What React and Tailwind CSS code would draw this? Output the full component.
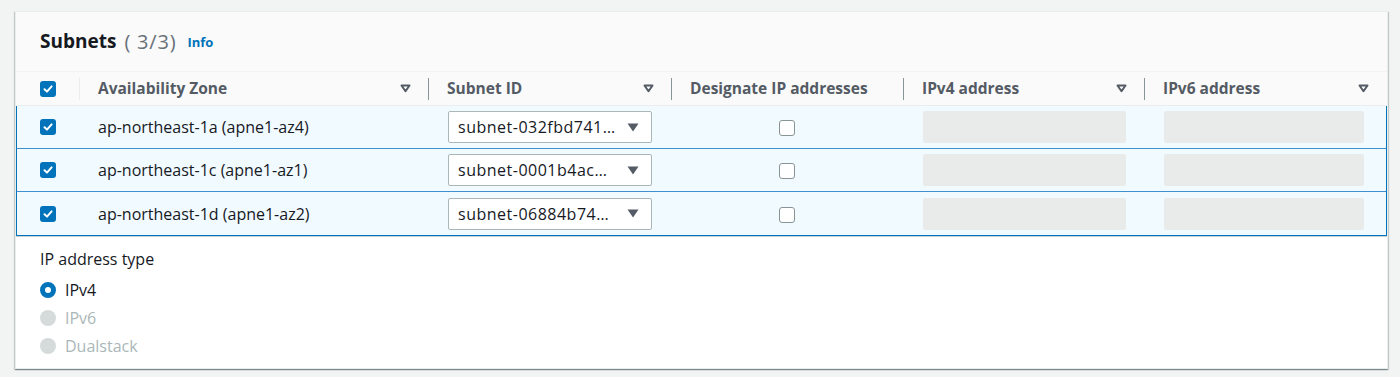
import React from "react";

const font = { fontFamily: '"Open Sans", "Noto Sans", Arial, sans-serif' };

function SortIcon() {
  return (
    <svg width="11" height="9" viewBox="0 0 11 9" className="shrink-0">
      <polygon points="1.5,1.5 9.5,1.5 5.5,7.2" fill="none" stroke="#545b64" strokeWidth="2" strokeLinejoin="round" />
    </svg>
  );
}

function Check({ checked }) {
  if (checked) {
    return (
      <div className="w-[16px] h-[16px] rounded-[3px] bg-[#0073bb] flex items-center justify-center shrink-0">
        <svg width="12" height="12" viewBox="0 0 12 12">
          <path d="M2.5 6.2 L5 8.6 L9.6 3.4" fill="none" stroke="#fff" strokeWidth="2" strokeLinecap="round" strokeLinejoin="round" />
        </svg>
      </div>
    );
  }
  return <div className="w-[16px] h-[16px] rounded-[3px] bg-white border border-[#879596] shrink-0" />;
}

function HeaderCell({ label, sep = "bg-[#879596]", sort = true, border = true }) {
  return (
    <div className="flex items-center h-full">
      {border && <div className={`w-px h-[22px] ${sep} shrink-0`} />}
      <div className="ml-[18px] flex-1 font-bold text-[15.5px] text-[#545b64] whitespace-nowrap">{label}</div>
      {sort && (
        <div className="mr-[17px]">
          <SortIcon />
        </div>
      )}
    </div>
  );
}

const cols = "grid grid-cols-[62px_349px_243px_232px_241px_242px]";

const rows = [
  { az: "ap-northeast-1a (apne1-az4)", subnet: "subnet-032fbd741…" },
  { az: "ap-northeast-1c (apne1-az1)", subnet: "subnet-0001b4ac…" },
  { az: "ap-northeast-1d (apne1-az2)", subnet: "subnet-06884b74…" },
];

export default function App() {
  return (
    <div className="w-[1400px] h-[377px] bg-[#f2f3f3] pt-[11px] pl-[15px]" style={font}>
      <div className="w-[1373px] h-[358px] bg-white border border-[#eaeded] shadow-[0_1px_1px_0_rgba(0,28,36,0.3),1px_1px_1px_0_rgba(0,28,36,0.15),-1px_1px_1px_0_rgba(0,28,36,0.15)]">
        <div className="bg-[#fafafa]">
          <div className="h-[59px] flex items-center pl-[24px]">
            <span className="font-bold text-[19px] text-[#16191f]">Subnets</span>
            <span className="text-[20px] tracking-[0.8px] text-[#687078] ml-[8px]">( 3/3)</span>
            <span className="font-bold text-[13px] text-[#0073bb] ml-[11px] mt-[3px]">Info</span>
          </div>
          <div className={`${cols} h-[35px] border-t border-[#f2f3f3] border-x border-x-transparent border-b border-b-[#eaeded]`}>
            <div className="flex items-center pl-[23px]">
              <Check checked />
            </div>
            <HeaderCell label="Availability Zone" sep="bg-[#eaeded]" />
            <HeaderCell label="Subnet ID" />
            <HeaderCell label="Designate IP addresses" sort={false} />
            <HeaderCell label="IPv4 address" />
            <HeaderCell label="IPv6 address" />
          </div>
        </div>
        <div className="border-x border-b border-[#0073bb] shadow-[0_1px_0_0_rgba(0,28,36,0.2)]">
          {rows.map((r, i) => (
            <div
              key={i}
              className={`${cols} h-[43px] bg-[#f1faff] ${i < rows.length - 1 ? "border-b border-[#3d8fcf]" : ""}`}
            >
              <div className="flex items-center pl-[23px]">
                <Check checked />
              </div>
              <div className="flex items-center pl-[19px] text-[16px] text-[#16191f] whitespace-nowrap">{r.az}</div>
              <div className="flex items-center pl-[20px]">
                <div className="w-[204px] h-[32px] bg-white border border-[#aab7b8] rounded-[2px] flex items-center pl-[9px] pr-[12px]">
                  <span className="flex-1 text-[16px] tracking-[0.5px] text-[#16191f] whitespace-nowrap">{r.subnet}</span>
                  <svg width="12" height="9" viewBox="0 0 12 9">
                    <polygon points="0.5,0.5 11.5,0.5 6,8.5" fill="#545b64" />
                  </svg>
                </div>
              </div>
              <div className="flex items-center justify-center pt-[2px]">
                <Check checked={false} />
              </div>
              <div className="flex items-center pl-[20px]">
                <div className="w-[203px] h-[32px] bg-[#e9ebeb] rounded-[2px]" />
              </div>
              <div className="flex items-center pl-[20px]">
                <div className="w-[200px] h-[32px] bg-[#e9ebeb] rounded-[2px]" />
              </div>
            </div>
          ))}
        </div>
        <div className="pl-[24px] pt-[12px]">
          <div className="text-[16px] leading-[22px] text-[#16191f]">IP address type</div>
          <div className="mt-[6px]">
            <div className="h-[28px] flex items-center gap-[9px]">
              <div className="w-[16px] h-[16px] rounded-full border-[5px] border-[#0073bb] bg-white" />
              <span className="text-[16px] text-[#16191f]">IPv4</span>
            </div>
            <div className="h-[28px] flex items-center gap-[9px]">
              <div className="w-[16px] h-[16px] rounded-full bg-[#d5dbdb]" />
              <span className="text-[16px] text-[#aab7b8]">IPv6</span>
            </div>
            <div className="h-[28px] flex items-center gap-[9px]">
              <div className="w-[16px] h-[16px] rounded-full bg-[#d5dbdb]" />
              <span className="text-[16px] text-[#aab7b8]">Dualstack</span>
            </div>
          </div>
        </div>
      </div>
    </div>
  );
}
